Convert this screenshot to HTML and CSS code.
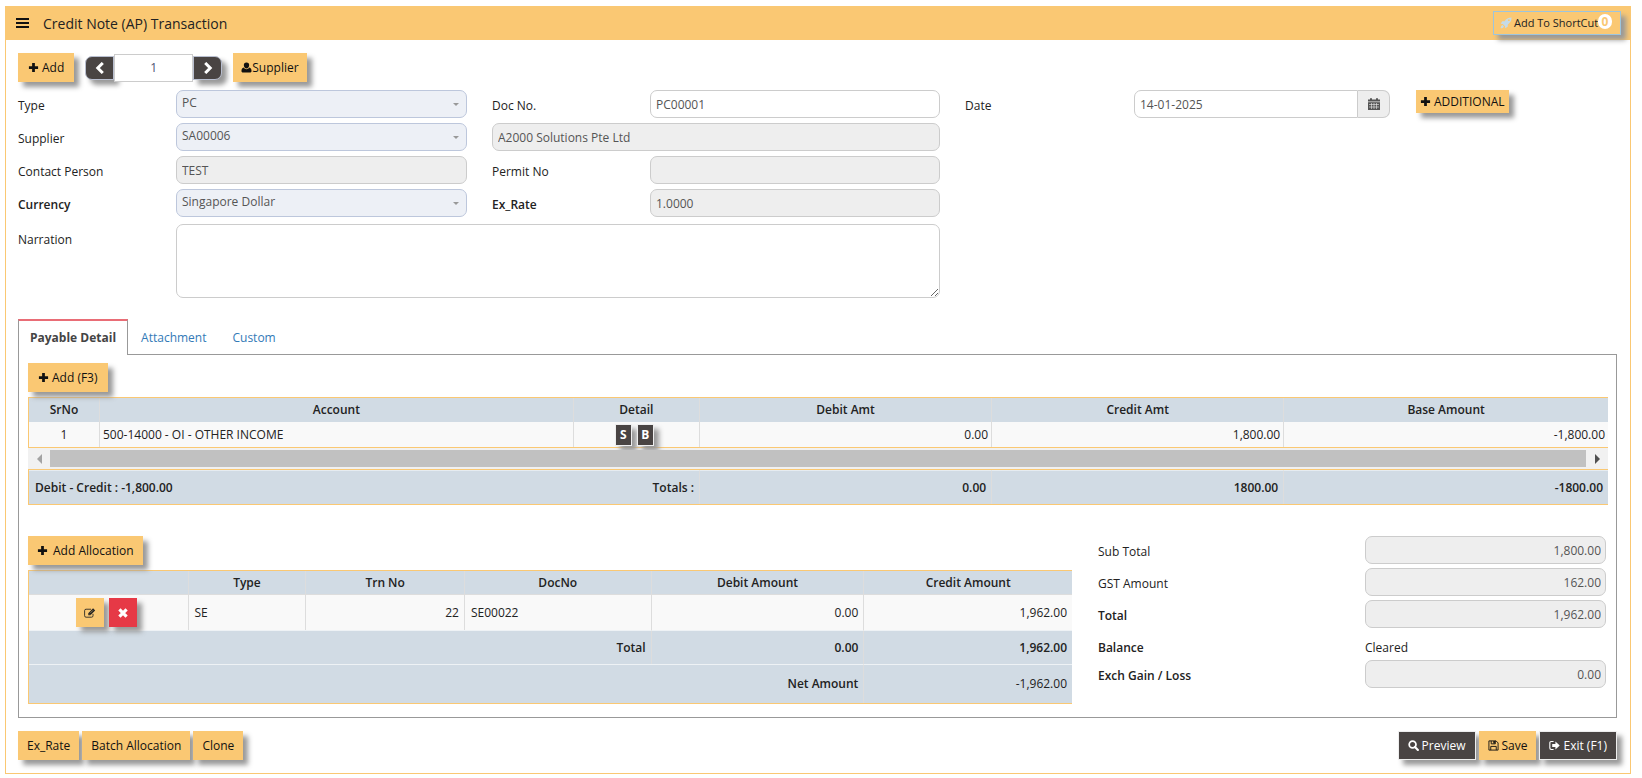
FILE: index.html
```html
<!DOCTYPE html>
<html lang="en">

<head>
    <meta charset="UTF-8">
    <meta name="viewport" content="width=device-width, initial-scale=1.0">
    <title>Credit Note (AP) Transaction</title>
    <link rel="stylesheet" href="styles.css">
</head>

<body>
    <!-- icon set -->
    <svg class="sprite" aria-hidden="true">
        <symbol id="plus" viewBox="0 0 12 12"><path d="M4.500 1h3v3.500h3.500v3h-3.500v3.500h-3v-3.500H1v-3h3.500z"/></symbol>
        <symbol id="left" viewBox="0 0 12 12"><path d="M8.800 1L3.800 6l5 5" fill="none" stroke="currentColor" stroke-width="3"/></symbol>
        <symbol id="right" viewBox="0 0 12 12"><path d="M3.200 1l5 5-5 5" fill="none" stroke="currentColor" stroke-width="3"/></symbol>
        <symbol id="user" viewBox="0 0 12 12"><path d="M6 .5a2.900 2.900 0 0 1 2.900 3C8.900 5.400 7.600 7 6 7S3.100 5.400 3.100 3.500A2.900 2.900 0 0 1 6 .5zM3 6c.8 1.200 1.800 1.800 3 1.800S8.200 7.200 9 6c1.800.3 2.500 1.800 2.500 3.800 0 1-.7 1.700-1.700 1.700H2.200C1.200 11.500.5 10.800.5 9.800.5 7.800 1.200 6.300 3 6z"/></symbol>
        <symbol id="calendar" viewBox="0 0 12 12"><path d="M0 1.500h2V.3h2v1.200h4V.3h2v1.200h2v2H0z"/><path d="M0 4.200h12V12H0z"/><path d="M1 6.500h10M1 9h10M3.500 5v6M6 5v6M8.500 5v6" fill="none" stroke="#eee" stroke-width=".6"/></symbol>
        <symbol id="edit" viewBox="0 0 14 12"><path d="M10.500 7v2.200a1.700 1.700 0 0 1-1.700 1.700H2.400A1.700 1.700 0 0 1 .7 9.200V3.300a1.700 1.700 0 0 1 1.700-1.700h5.800" fill="none" stroke="currentColor"/><path d="M5 6.200L10.600.6l2.400 2.400-5.600 5.600H5z"/><path d="M6 6.800l1 1M7.500 5.800l3-3" stroke="#fac873" stroke-width=".6"/></symbol>
        <symbol id="times" viewBox="0 0 12 12"><path d="M2.400 2.400l7.200 7.200M9.600 2.400L2.400 9.600" fill="none" stroke="currentColor" stroke-width="3.200"/></symbol>
        <symbol id="search" viewBox="0 0 12 12"><circle cx="5" cy="5" r="3.700" fill="none" stroke="currentColor" stroke-width="1.900"/><path d="M7.600 7.600l3.200 3.200" stroke="currentColor" stroke-width="2.300" stroke-linecap="round"/></symbol>
        <symbol id="save" viewBox="0 0 12 12"><path d="M1 1h7.800L11 3.200V11H1zM3 11V7h6v4M3.500 1v3.200h4.500V1" fill="none" stroke="currentColor"/><path d="M5.800 1.200h1.700v2.600H5.800z"/></symbol>
        <symbol id="exit" viewBox="0 0 12 12"><path d="M5 1.700H2.400C1.500 1.700.9 2.300.9 3.200v5.600c0 .9.6 1.500 1.500 1.500H5" fill="none" stroke="currentColor" stroke-width="1.200"/><path d="M3.500 4.300H7V1.700L11.700 6 7 10.300V7.700H3.500z"/></symbol>
        <symbol id="rocket" viewBox="0 0 13 13"><path d="M12.500.5C9 .5 6.800 1.800 5 4.500L2.400 4.700.8 7.400l2.300.2 2.300 2.300.2 2.300 2.700-1.600.2-2.600C11.200 6.200 12.500 4 12.500.5zM2.800 8.800C1.200 9.300.8 10.700.7 12.300c1.600-.1 3-.5 3.500-2.100z"/><circle cx="9.600" cy="3.400" r="1" fill="#fac873"/></symbol>
    </svg>

    <div class="page">
        <header class="title_bar">
            <button class="menu" type="button" aria-label="Menu"><span></span><span></span><span></span></button>
            <h1>Credit Note (AP) Transaction</h1>
            <button class="shortcut shadow" type="button"><svg class="icon"><use href="#rocket"/></svg>Add To ShortCut<span class="badge">0</span></button>
        </header>

        <main class="content">
            <div class="toolbar">
                <button class="btn shadow" type="button"><svg class="icon"><use href="#plus"/></svg>Add</button>
                <div class="pager">
                    <button class="prev shadow" type="button" aria-label="Previous"><svg class="icon"><use href="#left"/></svg></button>
                    <input type="text" value="1" aria-label="Record">
                    <button class="next shadow" type="button" aria-label="Next"><svg class="icon"><use href="#right"/></svg></button>
                </div>
                <button class="btn tight shadow" type="button"><svg class="icon"><use href="#user"/></svg>Supplier</button>
            </div>

            <form class="form">
                <label for="type">Type</label>
                <div class="select"><select id="type"><option>PC</option></select></div>
                <label class="second" for="docno">Doc No.</label>
                <input class="field" id="docno" type="text" value="PC00001">
                <label class="second" for="date">Date</label>
                <div class="date">
                    <input class="field" id="date" type="text" value="14-01-2025">
                    <button type="button" aria-label="Pick date"><svg class="icon"><use href="#calendar"/></svg></button>
                </div>
                <button class="btn additional shadow" type="button"><svg class="icon"><use href="#plus"/></svg>ADDITIONAL</button>

                <label class="first" for="supplier">Supplier</label>
                <div class="select"><select id="supplier"><option>SA00006</option></select></div>
                <input class="field wide" type="text" value="A2000 Solutions Pte Ltd" aria-label="Supplier name" readonly>

                <label class="first" for="contact">Contact Person</label>
                <input class="field" id="contact" type="text" value="TEST" readonly>
                <label class="second" for="permit">Permit No</label>
                <input class="field" id="permit" type="text" readonly>

                <label class="first bold" for="currency">Currency</label>
                <div class="select"><select id="currency"><option>Singapore Dollar</option></select></div>
                <label class="second bold" for="rate">Ex_Rate</label>
                <input class="field" id="rate" type="text" value="1.0000" readonly>

                <label class="first tall" for="narration">Narration</label>
                <textarea id="narration"></textarea>
            </form>

            <nav class="tabs">
                <a class="active" href="#payable">Payable Detail</a>
                <a href="#attachment">Attachment</a>
                <a href="#custom">Custom</a>
            </nav>

            <section class="tab_panel" id="payable">
                <button class="btn shadow" type="button"><svg class="icon"><use href="#plus"/></svg>Add (F3)</button>
                <table class="detail">
                    <colgroup><col class="c_sr"><col class="c_account"><col class="c_detail"><col class="c_amt"><col class="c_amt"><col class="c_base"></colgroup>
                    <thead>
                        <tr><th>SrNo</th><th>Account</th><th>Detail</th><th>Debit Amt</th><th>Credit Amt</th><th>Base Amount</th></tr>
                    </thead>
                    <tbody>
                        <tr>
                            <td class="center">1</td>
                            <td>500-14000 - OI - OTHER INCOME</td>
                            <td class="center"><span class="minis"><button class="mini shadow" type="button">S</button><button class="mini shadow" type="button">B</button></span></td>
                            <td class="num">0.00</td>
                            <td class="num">1,800.00</td>
                            <td class="num">-1,800.00</td>
                        </tr>
                    </tbody>
                </table>
                <div class="scroll"><i class="arrow back"></i><i class="thumb"></i><i class="arrow fwd"></i></div>
                <table class="detail totals">
                    <colgroup><col class="c_sr"><col class="c_account"><col class="c_detail"><col class="c_amt"><col class="c_amt"><col class="c_base"></colgroup>
                    <tbody>
                        <tr><td colspan="2">Debit - Credit : -1,800.00</td><td class="sum">Totals :</td><td class="num">0.00</td><td class="num">1800.00</td><td class="num">-1800.00</td></tr>
                    </tbody>
                </table>

                <div class="lower">
                    <div class="allocation">
                        <button class="btn wide_gap shadow" type="button"><svg class="icon"><use href="#plus"/></svg>Add Allocation</button>
                        <table class="alloc">
                            <colgroup><col class="a_act"><col class="a_type"><col class="a_trn"><col class="a_doc"><col class="a_debit"><col></colgroup>
                            <thead>
                                <tr><th></th><th>Type</th><th>Trn No</th><th>DocNo</th><th>Debit Amount</th><th>Credit Amount</th></tr>
                            </thead>
                            <tbody>
                                <tr>
                                    <td><span class="actions"><button class="square shadow" type="button" aria-label="Edit"><svg class="icon"><use href="#edit"/></svg></button><button class="square red shadow" type="button" aria-label="Delete"><svg class="icon"><use href="#times"/></svg></button></span></td>
                                    <td>SE</td>
                                    <td class="num">22</td>
                                    <td>SE00022</td>
                                    <td class="num">0.00</td>
                                    <td class="num">1,962.00</td>
                                </tr>
                            </tbody>
                            <tfoot>
                                <tr><td class="num bold" colspan="4">Total</td><td class="num bold">0.00</td><td class="num bold">1,962.00</td></tr>
                                <tr class="net"><td class="num bold" colspan="5">Net Amount</td><td class="num">-1,962.00</td></tr>
                            </tfoot>
                        </table>
                    </div>
                    <div class="summary">
                        <label for="sub">Sub Total</label>
                        <input class="field" id="sub" type="text" value="1,800.00" readonly>
                        <label for="gst">GST Amount</label>
                        <input class="field" id="gst" type="text" value="162.00" readonly>
                        <label class="bold" for="total">Total</label>
                        <input class="field" id="total" type="text" value="1,962.00" readonly>
                        <label class="bold" for="balance">Balance</label>
                        <output id="balance">Cleared</output>
                        <label class="bold" for="exch">Exch Gain / Loss</label>
                        <input class="field" id="exch" type="text" value="0.00" readonly>
                    </div>
                </div>
            </section>

            <footer class="bottom">
                <button class="btn shadow" type="button">Ex_Rate</button>
                <button class="btn shadow" type="button">Batch Allocation</button>
                <button class="btn shadow" type="button">Clone</button>
                <span class="space"></span>
                <button class="btn dark shadow" type="button"><svg class="icon"><use href="#search"/></svg>Preview</button>
                <button class="btn shadow" type="button"><svg class="icon"><use href="#save"/></svg>Save</button>
                <button class="btn dark shadow" type="button"><svg class="icon"><use href="#exit"/></svg>Exit (F1)</button>
            </footer>
        </main>
    </div>
</body>

</html>
```
FILE: styles.css
```css
* {
    box-sizing: border-box;
}

body {
    margin: 6px 11px 5px 5px;
    background: #fff;
    color: #222;
    font-family: "Open Sans", "Noto Sans", sans-serif;
    font-size: 12px;
    line-height: 16px;
}

button, input, select, textarea {
    font: inherit;
    color: inherit;
    margin: 0;
}

button {
    border: 0;
    padding: 0;
    cursor: pointer;
}

.sprite {
    display: none;
}

.icon {
    width: 12px;
    height: 12px;
    fill: currentColor;
    flex: none;
}

.bold {
    font-weight: 600;
}

.shadow {
    box-shadow: 5px 5px 5px #999;
}

.page {
    border: 1px solid #fac873;
    border-top: 0;
}

/* title bar */
.title_bar {
    display: flex;
    align-items: center;
    height: 34px;
    padding: 0 9px 0 10px;
    background: #fac873;
}

.title_bar h1 {
    flex: 1;
    margin: 0 0 0 14px;
    padding-top: 2px;
    font-size: 14px;
    font-weight: 400;
    line-height: 20px;
}

.menu {
    display: flex;
    flex-direction: column;
    gap: 2px;
    width: 13px;
    background: none;
}

.menu span {
    height: 2px;
    background: #111;
}

.shortcut {
    position: relative;
    display: flex;
    align-items: center;
    gap: 2px;
    width: 128px;
    height: 24px;
    padding-left: 6px;
    border: 1px solid #9cc5de;
    background: #fac873;
    font-size: 11px;
    white-space: nowrap;
}

.shortcut .icon {
    color: #c5dbe8;
}

.badge {
    position: absolute;
    right: 8px;
    top: 2px;
    width: 14px;
    height: 15px;
    border-radius: 7px;
    background: #fff;
    color: #fac873;
    font-size: 12px;
    font-weight: 700;
    line-height: 15px;
}

.content {
    padding: 13px 13px 13px 12px;
}

/* buttons */
.btn {
    display: inline-flex;
    align-items: center;
    justify-content: center;
    gap: 3px;
    height: 29px;
    padding: 0 10px;
    background: #fac873;
    color: #111;
    white-space: nowrap;
}

.btn .icon {
    width: 11px;
    height: 11px;
}

.toolbar {
    display: flex;
    gap: 11px;
    margin-bottom: 8px;
}

.btn.tight {
    gap: 0;
    padding: 0 8px;
}

.btn.wide_gap {
    gap: 5px;
    padding: 0 9px;
}

.btn.dark {
    border: 1px solid #eee;
    background: #494443;
    color: #fff;
}

.pager {
    display: flex;
    align-items: center;
}

.pager button {
    display: flex;
    align-items: center;
    justify-content: center;
    width: 29px;
    height: 24px;
    border: 1px solid #b9bfd0;
    background: #494443;
    color: #fff;
}

.pager .prev {
    border-radius: 7px 0 0 7px;
}

.pager .next {
    border-radius: 0 7px 7px 0;
}

.pager input {
    position: relative;
    width: 79px;
    height: 28px;
    border: 1px solid #ccc;
    background: #fff;
    color: #4f5573;
    text-align: center;
}

/* entry form */
.form {
    display: grid;
    grid-template-columns: 158fr 291fr 183fr 290fr 194fr 256fr 227fr;
    row-gap: 5px;
}

.form label, .summary label {
    padding-top: 8px;
}

.form .first {
    grid-column: 1;
}

.form .second {
    padding-left: 25px;
}

.form .tall {
    padding-top: 10px;
}

.field, .select select, textarea {
    width: 100%;
    min-width: 0;
    height: 28px;
    padding: 0 5px;
    border: 1px solid #ccc;
    border-radius: 7px;
    background: #fff;
    color: #555;
}

.field:read-only {
    background: #eee;
}

.field.wide {
    grid-column: 3 / 5;
    width: auto;
    margin-left: 25px;
}

.select {
    position: relative;
}

.select select {
    appearance: none;
    padding-bottom: 3px;
    border-color: #bdc7dc;
    background: #edf0f6;
}

.select::after {
    content: "";
    position: absolute;
    right: 8px;
    top: 13px;
    border: 3px solid transparent;
    border-top-color: #999;
    border-bottom: 0;
}

.date {
    display: flex;
}

.date .field {
    border-radius: 7px 0 0 7px;
}

.date button {
    display: flex;
    align-items: center;
    justify-content: center;
    flex: none;
    width: 32px;
    height: 28px;
    border: 1px solid #ccc;
    border-left: 0;
    border-radius: 0 7px 7px 0;
    background: #eee;
    color: #555;
}

.additional {
    justify-self: start;
    height: 23px;
    margin-left: 26px;
    padding: 0 4px;
}

textarea {
    display: block;
    grid-column: 2 / 5;
    height: 74px;
    margin-top: 2px;
    resize: vertical;
}

/* tabs */
.tabs {
    display: flex;
    margin-top: 21px;
}

.tabs::after {
    content: "";
    flex: 1;
    border-bottom: 1px solid #999;
}

.tabs a {
    height: 36px;
    padding: 11px 13px 0;
    border-bottom: 1px solid #999;
    color: #337ab7;
    text-decoration: none;
}

.tabs .active {
    padding: 9px 11px 0;
    border: 1px solid #999;
    border-top: 2px solid #e96d76;
    border-bottom: 0;
    color: #444;
    font-weight: 700;
}

.tab_panel {
    padding: 8px 8px 13px 9px;
    border: 1px solid #999;
    border-top: 0;
}

/* tables */
table {
    width: 100%;
    border-collapse: separate;
    border-spacing: 0;
    table-layout: fixed;
}

th {
    padding: 0;
    background: #d1dbe4;
    font-weight: 600;
}

th + th, td + td {
    border-left: 1px solid #ddd;
}

td {
    height: 25px;
    padding: 0 3px;
    background: #f9f9f9;
}

.center {
    text-align: center;
}

.num, .sum {
    text-align: right;
}

.detail {
    margin-top: 5px;
    border: 1px solid #fac873;
    border-right: 0;
}

.detail th {
    height: 24px;
}

.c_sr { width: 70px; }
.c_account { width: 30%; }
.c_detail { width: 8%; }
.c_amt { width: 18.5%; }

.minis {
    display: flex;
    justify-content: center;
    gap: 5px;
    padding-right: 4px;
}

.mini {
    width: 17px;
    height: 22px;
    border: 1px solid #eee;
    background: #494443;
    color: #fff;
    font-weight: 700;
}

.scroll {
    display: flex;
    align-items: center;
    height: 21px;
    background: #f1f1f1;
}

.thumb {
    flex: 1;
    height: 17px;
    background: #c1c1c1;
}

.arrow {
    display: flex;
    justify-content: center;
    width: 22px;
}

.arrow::before {
    content: "";
    border: 5px solid transparent;
}

.back::before {
    border-left: 0;
    border-right-color: #a3a3a3;
}

.fwd::before {
    border-right: 0;
    border-left-color: #505050;
}

.totals {
    margin-top: 0;
}

.totals td {
    height: 34px;
    padding: 0 5px 0 6px;
    border-top: 1px solid #e6ecf1;
    background: #d1dbe4;
    font-weight: 600;
}

.totals .sum {
    border-left: 0;
}

.lower {
    display: grid;
    grid-template-columns: 1044fr 536fr;
    margin-top: 31px;
}

.alloc {
    margin-top: 5px;
    border: 1px solid #fac873;
    border-right: 0;
}

.alloc th {
    height: 23px;
}

.alloc td {
    height: 36px;
    padding: 0 5px 0 6px;
    border-top: 1px solid #ddd;
}

.alloc tfoot td {
    height: 34px;
    border-top-color: #eef2f5;
    background: #d1dbe4;
}

.alloc .net td {
    height: 39px;
}

.a_act { width: 15.2%; }
.a_type { width: 11.3%; }
.a_trn { width: 15.2%; }
.a_doc { width: 17.9%; }
.a_debit { width: 20.4%; }

.actions {
    display: flex;
    justify-content: center;
    gap: 5px;
    padding-right: 5px;
}

.square {
    display: flex;
    align-items: center;
    justify-content: center;
    width: 28px;
    height: 29px;
    background: #fac873;
}

.square.red {
    background: #e63946;
    color: #fff;
}

.summary {
    display: grid;
    grid-template-columns: 267fr 241fr;
    align-content: start;
    row-gap: 4px;
    padding: 0 2px 0 26px;
}

.summary .field {
    padding: 0 4px;
    text-align: right;
}

.summary output {
    padding-top: 8px;
}

/* bottom buttons */
.bottom {
    display: flex;
    gap: 3px;
    margin-top: 13px;
}

.bottom .btn {
    padding: 0 9px;
}

.space {
    flex: 1;
}
```
